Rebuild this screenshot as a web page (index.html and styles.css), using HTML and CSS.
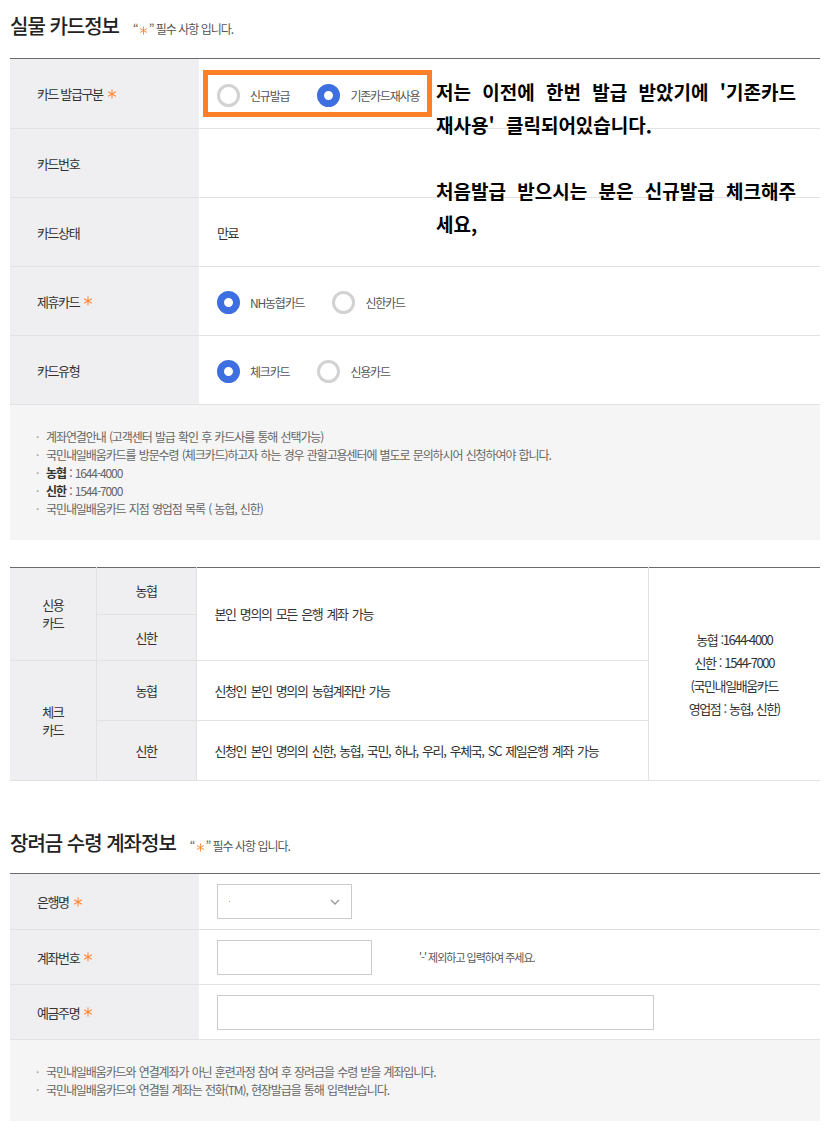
FILE: index.html
```html
<!DOCTYPE html>
<html lang="ko">

<head>
    <meta charset="UTF-8">
    <meta name="viewport" content="width=device-width, initial-scale=1.0">
    <title>실물 카드정보</title>
    <link rel="stylesheet" href="styles.css">
</head>

<body>

    <div class="page">

        <!-- 실물 카드정보 -->
        <div class="sec-head">
            <h2 class="sec-title">실물 카드정보</h2>
            <span class="req-note">“<svg class="star" viewBox="0 0 10 10"><path d="M5 0.5V9.5M1.1 2.75L8.9 7.25M1.1 7.25L8.9 2.75"/></svg>” 필수 사항 입니다.</span>
        </div>

        <div class="form-box">
            <div class="form-row">
                <div class="form-label">카드 발급구분 <svg class="star" viewBox="0 0 10 10"><path d="M5 0.5V9.5M1.1 2.75L8.9 7.25M1.1 7.25L8.9 2.75"/></svg></div>
                <div class="form-value">
                    <label class="radio"><span class="dot"></span>신규발급</label>
                    <label class="radio on"><span class="dot"></span>기존카드재사용</label>
                    <span class="mark-box"></span>
                </div>
            </div>
            <div class="form-row">
                <div class="form-label">카드번호</div>
                <div class="form-value"></div>
            </div>
            <div class="form-row">
                <div class="form-label">카드상태</div>
                <div class="form-value">만료</div>
            </div>
            <div class="form-row">
                <div class="form-label">제휴카드 <svg class="star" viewBox="0 0 10 10"><path d="M5 0.5V9.5M1.1 2.75L8.9 7.25M1.1 7.25L8.9 2.75"/></svg></div>
                <div class="form-value">
                    <label class="radio on"><span class="dot"></span>NH농협카드</label>
                    <label class="radio"><span class="dot"></span>신한카드</label>
                </div>
            </div>
            <div class="form-row">
                <div class="form-label">카드유형</div>
                <div class="form-value">
                    <label class="radio on"><span class="dot"></span>체크카드</label>
                    <label class="radio"><span class="dot"></span>신용카드</label>
                </div>
            </div>
        </div>

        <div class="notes">
            <ul>
                <li>계좌연결안내 (고객센터 발급 확인 후 카드사를 통해 선택가능)</li>
                <li>국민내일배움카드를 방문수령 (체크카드)하고자 하는 경우 관할고용센터에 별도로 문의하시어 신청하여야 합니다.</li>
                <li><b>농협</b> : 1644-4000</li>
                <li><b>신한</b> : 1544-7000</li>
                <li>국민내일배움카드 지점 영업점 목록 ( 농협, 신한)</li>
            </ul>
        </div>

        <table class="bank-table">
            <colgroup>
                <col class="c1">
                <col class="c2">
                <col class="c3">
                <col class="c4">
            </colgroup>
            <tr class="r-a">
                <th rowspan="2">신용<br>카드</th>
                <th>농협</th>
                <td rowspan="2">본인 명의의 모든 은행 계좌 가능</td>
                <td rowspan="4" class="contact">농협 :1644-4000<br>신한 : 1544-7000<br>(국민내일배움카드<br>영업점 : 농협, 신한)</td>
            </tr>
            <tr class="r-b">
                <th>신한</th>
            </tr>
            <tr class="r-c">
                <th rowspan="2">체크<br>카드</th>
                <th>농협</th>
                <td>신청인 본인 명의의 농협계좌만 가능</td>
            </tr>
            <tr class="r-d">
                <th>신한</th>
                <td>신청인 본인 명의의 신한, 농협, 국민, 하나, 우리, 우체국, SC 제일은행 계좌 가능</td>
            </tr>
        </table>

        <!-- 장려금 수령 계좌정보 -->
        <div class="sec-head sec-head-2">
            <h2 class="sec-title">장려금 수령 계좌정보</h2>
            <span class="req-note">“<svg class="star" viewBox="0 0 10 10"><path d="M5 0.5V9.5M1.1 2.75L8.9 7.25M1.1 7.25L8.9 2.75"/></svg>” 필수 사항 입니다.</span>
        </div>

        <div class="form-box form-box-sm">
            <div class="form-row">
                <div class="form-label">은행명 <svg class="star" viewBox="0 0 10 10"><path d="M5 0.5V9.5M1.1 2.75L8.9 7.25M1.1 7.25L8.9 2.75"/></svg></div>
                <div class="form-value">
                    <div class="select">
                        <span class="select-dot"></span>
                        <svg class="chevron" viewBox="0 0 10 6"><path d="M1 1L5 5L9 1"/></svg>
                    </div>
                </div>
            </div>
            <div class="form-row">
                <div class="form-label">계좌번호 <svg class="star" viewBox="0 0 10 10"><path d="M5 0.5V9.5M1.1 2.75L8.9 7.25M1.1 7.25L8.9 2.75"/></svg></div>
                <div class="form-value">
                    <input type="text" class="input input-acct">
                    <span class="hint">'-' 제외하고 입력하여 주세요.</span>
                </div>
            </div>
            <div class="form-row">
                <div class="form-label">예금주명 <svg class="star" viewBox="0 0 10 10"><path d="M5 0.5V9.5M1.1 2.75L8.9 7.25M1.1 7.25L8.9 2.75"/></svg></div>
                <div class="form-value">
                    <input type="text" class="input input-name">
                </div>
            </div>
        </div>

        <div class="notes">
            <ul>
                <li>국민내일배움카드와 연결계좌가 아닌 훈련과정 참여 후 장려금을 수령 받을 계좌입니다.</li>
                <li>국민내일배움카드와 연결될 계좌는 전화(TM), 현장발급을 통해 입력받습니다.</li>
            </ul>
        </div>

        <!-- 캡처 위에 적은 메모 -->
        <p class="memo">저는 이전에 한번 발급 받았기에 '기존카드<br>재사용' 클릭되어있습니다.<br><br>처음발급 받으시는 분은 신규발급 체크해주<br>세요,</p>

    </div>

</body>

</html>
```

FILE: styles.css
```css
body {
    margin: 0;
    background-color: #fff;
    font-family: "Noto Sans CJK KR", "Noto Sans", sans-serif;
    font-size: 13px;
    letter-spacing: -1.4px;
    word-spacing: 2px;
    color: #333;
}

.page {
    position: relative;
    width: 810px;
    margin: 0 10px;
    padding-top: 13px;
}

/* section title */

.sec-head {
    display: flex;
    align-items: baseline;
    margin-bottom: 19px;
}

.sec-head-2 {
    margin-top: 49px;
    margin-bottom: 17px;
}

.sec-title {
    margin: 0;
    font-size: 20px;
    line-height: 26px;
    font-weight: 500;
    letter-spacing: -1px;
    word-spacing: 0;
    color: #222;
}

.req-note {
    margin-left: 14px;
    font-size: 12px;
    letter-spacing: -1px;
    word-spacing: 0;
    color: #555;
}

.req-note .star {
    width: 9px;
    height: 9px;
    margin: 0 1px;
}

.star {
    width: 10px;
    height: 10px;
    margin-left: 4px;
    vertical-align: -1px;
}

.star path {
    fill: none;
    stroke: #ff8b3d;
    stroke-width: 1.1;
}

/* form rows */

.form-box {
    border-top: 1px solid #6b6b6b;
}

.form-row {
    display: grid;
    grid-template-columns: 189px 1fr;
    height: 69px;
    box-sizing: border-box;
    border-bottom: 1px solid #e2e2e2;
}

.form-row:first-child {
    height: 70px;
}

.form-box-sm .form-row {
    height: 55px;
}

.form-box-sm .form-row:first-child {
    height: 56px;
}

.form-label {
    display: flex;
    align-items: center;
    padding-left: 27px;
    word-spacing: 0;
    background-color: #efeff2;
}

.form-value {
    position: relative;
    display: flex;
    align-items: center;
    padding-left: 18px;
}

.radio {
    display: flex;
    align-items: center;
    margin-top: 3px;
    margin-right: 28px;
    font-size: 12px;
    letter-spacing: -1.2px;
    color: #555;
}

.radio .dot {
    width: 23px;
    height: 23px;
    box-sizing: border-box;
    margin-right: 10px;
    border: 3px solid #d2d2d2;
    border-radius: 50%;
    background-color: #fff;
}

.radio.on .dot {
    border: 7px solid #3d6fe0;
}

.mark-box {
    position: absolute;
    left: 4px;
    top: 11px;
    width: 229px;
    height: 47px;
    box-sizing: border-box;
    border: 5px solid #ff7f27;
}

/* notes */

.notes {
    padding: 23px 0 22px;
    background-color: #f5f5f5;
}

.notes ul {
    margin: 0;
    padding: 0;
    list-style: none;
}

.notes li {
    padding-left: 26px;
    font-size: 12px;
    letter-spacing: -1.1px;
    word-spacing: 1px;
    line-height: 18px;
    color: #666;
}

.notes li::before {
    content: "·";
    display: inline-block;
    width: 10px;
    color: #999;
}

.notes b {
    color: #333;
}

/* bank table */

.bank-table {
    width: 810px;
    margin-top: 27px;
    border-collapse: collapse;
    border-top: 1px solid #6b6b6b;
    table-layout: fixed;
}

.bank-table .c1 {
    width: 86px;
}

.bank-table .c2 {
    width: 100px;
}

.bank-table .c3 {
    width: 452px;
}

.bank-table .c4 {
    width: 172px;
}

.bank-table th,
.bank-table td {
    padding: 0;
    border: 1px solid #e2e2e2;
    border-top: 0;
    line-height: 18px;
}

.bank-table th {
    font-weight: normal;
    background-color: #efeff2;
    color: #333;
}

.bank-table th:first-child,
.bank-table .r-b th,
.bank-table .r-d th:first-child {
    border-left: 0;
}

.bank-table td {
    padding-left: 18px;
    text-align: left;
}

.bank-table td.contact {
    padding: 0;
    border-right: 0;
    text-align: center;
    line-height: 23px;
    word-spacing: 1px;
}

.bank-table .r-a {
    height: 47px;
}

.bank-table .r-b {
    height: 46px;
}

.bank-table .r-c {
    height: 60px;
}

.bank-table .r-d {
    height: 60px;
}

/* inputs */

.select {
    display: flex;
    align-items: center;
    justify-content: space-between;
    width: 135px;
    height: 35px;
    box-sizing: border-box;
    padding: 0 11px;
    border: 1px solid #cbcbcb;
    background-color: #fff;
}

.select-dot {
    width: 1px;
    height: 1px;
    background-color: #d49a6a;
}

.chevron {
    width: 10px;
    height: 6px;
}

.chevron path {
    fill: none;
    stroke: #999;
    stroke-width: 1.4;
}

.input {
    height: 35px;
    box-sizing: border-box;
    margin: 0;
    border: 1px solid #cbcbcb;
    background-color: #fff;
}

.input-acct {
    width: 155px;
}

.input-name {
    width: 437px;
}

.hint {
    margin-left: 47px;
    font-size: 11px;
    letter-spacing: -1px;
    word-spacing: 0;
    color: #555;
}

/* memo over the screenshot */

.memo {
    position: absolute;
    left: 426px;
    top: 75px;
    margin: 0;
    font-size: 19px;
    font-weight: bold;
    line-height: 33px;
    letter-spacing: 0;
    word-spacing: 6px;
    white-space: nowrap;
    color: #000;
}
```
